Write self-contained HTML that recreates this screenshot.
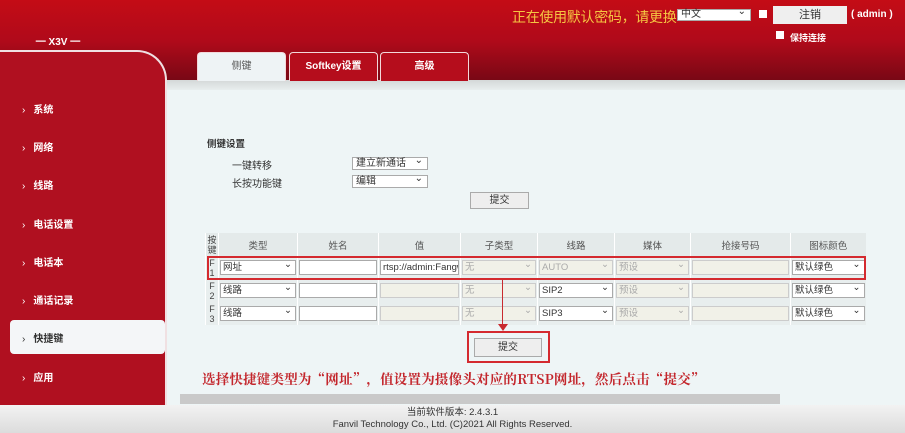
<!DOCTYPE html>
<html><head><meta charset="utf-8"><style>
*{box-sizing:border-box;margin:0;padding:0}
body{width:905px;height:433px;overflow:hidden;position:relative;background:#eef5f6;font-family:"Liberation Sans","Noto Sans CJK SC",sans-serif;font-size:10px;color:#333}
.hdr{position:absolute;left:0;top:0;width:905px;height:82px;background:linear-gradient(#c40c16,#b00a1a 50%,#760815)}
.band{position:absolute;left:0;top:80px;width:905px;height:10px;background:linear-gradient(#d4d8d8,#e8eeee)}
.side{position:absolute;left:0;top:50px;width:167px;height:356px;background:#b01020;border:2px solid #f0e0e2;border-left:none;border-bottom:none;border-top-right-radius:30px}
.mi{position:absolute;left:22px;color:#fff;font-weight:bold;font-size:10px}
.mi:before{content:"›";margin-right:8px;font-weight:normal}
.sel{position:absolute;left:10px;top:320px;width:155px;height:34px;background:#f4f6f8;border-radius:4px}
.tab{position:absolute;top:52px;height:29px;border:1px solid #f3d8da;border-bottom:none;border-radius:4px 4px 0 0;background:#b50d1c;color:#fff;text-align:center;line-height:28px;font-size:10px;font-weight:bold}
.t1{background:#eef3f5;color:#555;font-weight:normal}
.top{position:absolute;color:#f5c542;font-size:14px;left:512px;top:7px;white-space:nowrap;letter-spacing:-0.3px}
.sel2{position:absolute;background:#fff;border:1px solid #aaa;height:16px;font-size:10px;padding-left:3px;line-height:14px;color:#333}
.sel2:after{content:"⌄";position:absolute;right:4px;top:-3px;font-size:10px}
.btn{position:absolute;background:#eee;border:1px solid #aaa;text-align:center;font-size:10px;line-height:16px;color:#333}
table{position:absolute;left:205px;top:233px;width:660px;border-collapse:collapse;font-size:9.5px;table-layout:fixed}
td,th{border-left:1px solid #fff;padding:0 1px;height:23px;overflow:hidden}
th{font-weight:normal;color:#555;background:#e4eaea}
tr.r td{background:#e8eeee}
.in{display:block;height:15px;border:1px solid #aaa;background:#fff;font-size:9.5px;line-height:13px;padding-left:2px;position:relative;white-space:nowrap;overflow:hidden}
.dis{background:#f1f1e8;color:#aaa;border-color:#ccc}
.s:after{content:"⌄";position:absolute;right:3px;top:-3px}
.fk{font-size:9px;line-height:10px;color:#444;text-align:center}
</style></head><body>
<div class="hdr"></div>
<div style="position:absolute;left:18px;top:33px;width:80px;height:11px;color:#fff;font-weight:bold;font-size:10px;text-align:center">━ X3V ━</div>
<div class="top">正在使用默认密码，请更换</div>
<div class="sel2" style="left:677px;top:9px;width:74px;height:12px;line-height:10px">中文</div>
<div style="position:absolute;left:759px;top:10px;width:8px;height:8px;background:#fff"></div>
<div class="btn" style="left:773px;top:6px;width:74px;height:18px;line-height:18px;border:none;background:#efefef;font-size:11px">注销</div>
<div style="position:absolute;left:851px;top:9px;color:#fff;font-weight:bold;font-size:10px">( admin )</div>
<div style="position:absolute;left:776px;top:31px;width:8px;height:8px;background:#fff"></div>
<div style="position:absolute;left:790px;top:31px;color:#fff;font-weight:bold;font-size:9px">保持连接</div>
<div class="band"></div>
<div class="tab t1" style="left:197px;width:89px">侧键</div>
<div class="tab" style="left:289px;width:89px">Softkey设置</div>
<div class="tab" style="left:380px;width:89px">高级</div>
<div class="side"></div>
<div class="sel"></div>
<div class="mi" style="top:101px">系统</div>
<div class="mi" style="top:139px">网络</div>
<div class="mi" style="top:177px">线路</div>
<div class="mi" style="top:216px">电话设置</div>
<div class="mi" style="top:254px">电话本</div>
<div class="mi" style="top:292px">通话记录</div>
<div class="mi" style="top:330px;color:#333">快捷键</div>
<div class="mi" style="top:369px">应用</div>
<div style="position:absolute;left:207px;top:136px;font-weight:bold;font-size:9.5px;color:#333">侧键设置</div>
<div style="position:absolute;left:232px;top:157px;font-size:10px">一键转移</div>
<div style="position:absolute;left:232px;top:175px;font-size:10px">长按功能键</div>
<div class="sel2" style="left:352px;top:157px;width:76px;height:13px;line-height:11px">建立新通话</div>
<div class="sel2" style="left:352px;top:175px;width:76px;height:13px;line-height:11px">编辑</div>
<div class="btn" style="left:470px;top:192px;width:59px;height:17px">提交</div>
<table>
<colgroup><col style="width:13px"><col style="width:79px"><col style="width:81px"><col style="width:82px"><col style="width:77px"><col style="width:77px"><col style="width:76px"><col style="width:100px"><col style="width:75px"></colgroup>
<tr><th class="fk">按<br>键</th><th>类型</th><th>姓名</th><th>值</th><th>子类型</th><th>线路</th><th>媒体</th><th>抢接号码</th><th>图标颜色</th></tr>
<tr class="r"><td class="fk">F<br>1</td><td><span class="in s">网址</span></td><td><span class="in"></span></td><td><span class="in">rtsp://admin:Fangw</span></td><td><span class="in s dis">无</span></td><td><span class="in s dis">AUTO</span></td><td><span class="in s dis">预设</span></td><td><span class="in dis"></span></td><td><span class="in s">默认绿色</span></td></tr>
<tr class="r"><td class="fk">F<br>2</td><td><span class="in s">线路</span></td><td><span class="in"></span></td><td><span class="in dis"></span></td><td><span class="in s dis">无</span></td><td><span class="in s">SIP2</span></td><td><span class="in s dis">预设</span></td><td><span class="in dis"></span></td><td><span class="in s">默认绿色</span></td></tr>
<tr class="r"><td class="fk">F<br>3</td><td><span class="in s">线路</span></td><td><span class="in"></span></td><td><span class="in dis"></span></td><td><span class="in s dis">无</span></td><td><span class="in s">SIP3</span></td><td><span class="in s dis">预设</span></td><td><span class="in dis"></span></td><td><span class="in s">默认绿色</span></td></tr>
</table>
<div style="position:absolute;left:207px;top:256px;width:659px;height:24px;border:2px solid #d42a2f"></div>
<div style="position:absolute;left:502px;top:280px;width:1px;height:45px;background:#c82a2f"></div>
<div style="position:absolute;left:498px;top:324px;border-left:5px solid transparent;border-right:5px solid transparent;border-top:7px solid #c82a2f"></div>
<div style="position:absolute;left:467px;top:331px;width:83px;height:32px;border:2px solid #d42a2f"></div>
<div class="btn" style="left:474px;top:338px;width:68px;height:19px;line-height:17px">提交</div>
<div style="position:absolute;left:202px;top:368px;color:#c3262c;font-family:'Noto Serif CJK SC','Liberation Serif',serif;font-weight:bold;font-size:13.5px;white-space:nowrap;letter-spacing:0.2px">选择快捷键类型为“网址”，值设置为摄像头对应的RTSP网址，然后点击“提交”</div>
<div style="position:absolute;left:180px;top:394px;width:600px;height:10px;background:#c9c9c9"></div>
<div style="position:absolute;left:0;top:405px;width:905px;height:28px;background:linear-gradient(#f2f2f2,#dcdcdc);text-align:center;font-size:9.5px;line-height:12px;padding-top:2px;color:#333">当前软件版本: 2.4.3.1<br>Fanvil Technology Co., Ltd. (C)2021 All Rights Reserved.</div>
</body></html>
